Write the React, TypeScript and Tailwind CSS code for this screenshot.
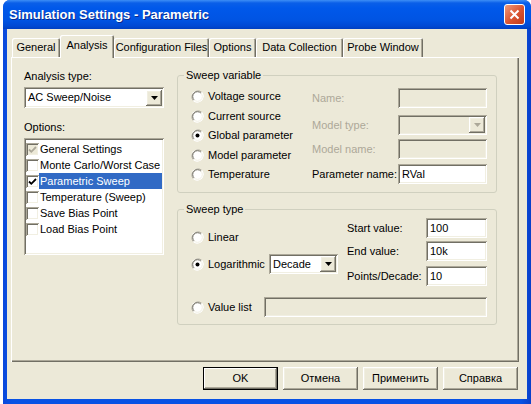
import type { ReactNode } from "react";

const sunken =
  "shadow-[inset_1px_1px_#aca899,inset_-1px_-1px_#fff,inset_2px_2px_#716f64,inset_-2px_-2px_#f1efe2]";
const raised =
  "shadow-[inset_-1px_-1px_#716f64,inset_1px_1px_#fff,inset_-2px_-2px_#aca899,inset_2px_2px_#f1efe2]";

function Radio({ checked = false }: { checked?: boolean }) {
  return (
    <svg width="13" height="13" viewBox="0 0 13 13" className="shrink-0">
      <circle cx="6.5" cy="6.5" r="6" fill="#fff" />
      <path d="M10.7 2.3 A6 6 0 0 0 2.3 10.7" fill="none" stroke="#aca899" />
      <path d="M9.9 3.1 A4.8 4.8 0 0 0 3.1 9.9" fill="none" stroke="#716f64" />
      <path d="M10.7 2.3 A6 6 0 0 1 2.3 10.7" fill="none" stroke="#fff" />
      <path d="M9.9 3.1 A4.8 4.8 0 0 1 3.1 9.9" fill="none" stroke="#f1efe2" />
      {checked && <circle cx="6.5" cy="6.5" r="2" fill="#000" />}
    </svg>
  );
}

function RadioRow({ label, checked, className = "" }: { label: string; checked?: boolean; className?: string }) {
  return (
    <div className={`flex items-center gap-[4px] ${className}`}>
      <Radio checked={checked} />
      <span>{label}</span>
    </div>
  );
}

function Check({ state }: { state: "off" | "on" | "grey" }) {
  return (
    <div
      className={`w-[13px] h-[13px] shrink-0 flex items-center justify-center ${sunken} ${
        state === "grey" ? "bg-[#ece9d8]" : "bg-white"
      }`}
    >
      {state !== "off" && (
        <svg width="9" height="9" viewBox="0 0 9 9">
          <path
            d="M1 4.5 L3.3 6.8 L8 2"
            fill="none"
            stroke={state === "grey" ? "#aca899" : "#000"}
            strokeWidth="1.8"
          />
        </svg>
      )}
    </div>
  );
}

function Edit({ value = "", disabled = false, className = "" }: { value?: string; disabled?: boolean; className?: string }) {
  return (
    <div
      className={`h-[20px] flex items-center px-[4px] ${sunken} ${disabled ? "bg-[#ece9d8]" : "bg-white"} ${className}`}
    >
      {value}
    </div>
  );
}

function Combo({ value = "", disabled = false, className = "" }: { value?: string; disabled?: boolean; className?: string }) {
  return (
    <div
      className={`flex items-center justify-between pl-[4px] pr-[2px] ${sunken} ${
        disabled ? "bg-[#ece9d8]" : "bg-white"
      } ${className}`}
    >
      <span>{value}</span>
      <div className={`w-[16px] h-[16px] bg-[#ece9d8] flex items-center justify-center ${raised}`}>
        <svg width="7" height="4" viewBox="0 0 7 4">
          <path d="M0 0 H7 L3.5 4 Z" fill={disabled ? "#aca899" : "#000"} />
        </svg>
      </div>
    </div>
  );
}

function Group({ title, className = "", children }: { title: string; className?: string; children: ReactNode }) {
  return (
    <fieldset className={`border border-[#d0d0bf] rounded-[3px] ${className}`}>
      <legend className="ml-[6px] px-[2px] leading-[14px]">{title}</legend>
      {children}
    </fieldset>
  );
}

function Button({ label, isDefault = false }: { label: string; isDefault?: boolean }) {
  return (
    <div
      className={`w-[75px] h-[23px] flex items-center justify-center bg-[#ece9d8] ${
        isDefault
          ? "border border-black shadow-[inset_-1px_-1px_#716f64,inset_1px_1px_#fff,inset_-2px_-2px_#aca899]"
          : raised
      }`}
    >
      {label}
    </div>
  );
}

const tabs = [
  { label: "General", w: "w-[48px]" },
  { label: "Analysis", w: "w-[54px]", active: true },
  { label: "Configuration Files", w: "w-[95px]" },
  { label: "Options", w: "w-[47px]" },
  { label: "Data Collection", w: "w-[87px]" },
  { label: "Probe Window", w: "w-[80px]" },
];

const options: { label: string; state: "off" | "on" | "grey"; selected?: boolean }[] = [
  { label: "General Settings", state: "grey" },
  { label: "Monte Carlo/Worst Case", state: "off" },
  { label: "Parametric Sweep", state: "on", selected: true },
  { label: "Temperature (Sweep)", state: "off" },
  { label: "Save Bias Point", state: "off" },
  { label: "Load Bias Point", state: "off" },
];

export default function App() {
  return (
    <div className="flex w-[531px] h-[404px] overflow-hidden bg-white font-['Liberation_Sans',Arial,sans-serif] text-[11px] leading-[13px] text-black">
      <div className="w-[3px] shrink-0 bg-white" />
      <div className="flex flex-col flex-1 rounded-t-[7px] overflow-hidden bg-[linear-gradient(to_right,#0a48dc,#0852e4_10px,#0852e4_calc(100%-10px),#0a3fc8)]">
        {/* title bar */}
        <div className="h-[29px] shrink-0 flex items-center justify-between pl-[6px] pr-[6px] bg-[linear-gradient(to_bottom,#3d8ef6_0px,#0a5fe8_3px,#0058ea_8px,#0054e3_20px,#0049d4_26px,#003fc0_29px)]">
          <span className="text-white font-bold text-[13px] leading-[16px] [text-shadow:1px_1px_#0c2a8a]">
            Simulation Settings - Parametric
          </span>
          <div className="w-[21px] h-[21px] rounded-[3px] border border-white bg-[linear-gradient(135deg,#ef9a7c,#d9532f_55%,#bf3b1c)] flex items-center justify-center">
            <svg width="11" height="11" viewBox="0 0 11 11">
              <path d="M1.5 1.5 L9.5 9.5 M9.5 1.5 L1.5 9.5" stroke="#fff" strokeWidth="2" />
            </svg>
          </div>
        </div>

        {/* dialog body */}
        <div className="flex-1 mx-[4px] mb-[5px] bg-[#ece9d8] flex flex-col">
          {/* tabs */}
          <div className="flex items-end h-[28px] pt-[6px] ml-[5px]">
            {tabs.map((t) => (
              <div
                key={t.label}
                className={`${t.w} flex items-center justify-center rounded-t-[2px] bg-[#ece9d8] ${
                  t.active
                    ? "h-[23px] -mb-px relative z-10 pb-[2px] shadow-[inset_1px_1px_#fff,inset_-1px_0_#716f64,inset_-2px_0_#aca899]"
                    : "h-[19px] shadow-[inset_1px_1px_#fff,inset_-1px_0_#716f64,inset_-2px_0_#aca899]"
                }`}
              >
                {t.label}
              </div>
            ))}
          </div>

          {/* tab panel */}
          <div className="ml-[4px] mr-[8px] h-[305px] flex shadow-[inset_1px_1px_#fff,inset_-1px_-1px_#716f64,inset_-2px_-2px_#aca899]">
            {/* left column */}
            <div className="ml-[13px] mt-[13px] w-[140px] flex flex-col">
              <div>Analysis type:</div>
              <Combo value="AC Sweep/Noise" className="mt-[4px] h-[21px]" />
              <div className="mt-[13px]">Options:</div>
              <div className={`mt-[4px] h-[117px] bg-white pt-[3px] px-[2px] ${sunken}`}>
                {options.map((o) => (
                  <div key={o.label} className="h-[16px] flex items-center">
                    <Check state={o.state} />
                    <span
                      className={`flex-1 h-[16px] flex items-center pl-[1px] ${
                        o.selected ? "bg-[#316ac5] text-white" : ""
                      }`}
                    >
                      {o.label}
                    </span>
                  </div>
                ))}
              </div>
            </div>

            {/* right column */}
            <div className="ml-[13px] w-[320px] flex flex-col">
              <Group title="Sweep variable" className="mt-[11px] h-[125px]">
                <div className="flex">
                  <div className="ml-[13px] pt-[5px] w-[121px] flex flex-col">
                    <RadioRow label="Voltage source" className="h-[19.5px]" />
                    <RadioRow label="Current source" className="h-[19.5px]" />
                    <RadioRow label="Global parameter" checked className="h-[19.5px]" />
                    <RadioRow label="Model parameter" className="h-[19.5px]" />
                    <RadioRow label="Temperature" className="h-[19.5px]" />
                  </div>
                  <div className="flex flex-col">
                    <div className="mt-[6px] flex items-center">
                      <span className="w-[86px] text-[#aca899]">Name:</span>
                      <Edit disabled className="w-[89px]" />
                    </div>
                    <div className="mt-[7px] flex items-center">
                      <span className="w-[86px] text-[#aca899]">Model type:</span>
                      <Combo disabled className="w-[89px] h-[20px]" />
                    </div>
                    <div className="mt-[4px] flex items-center">
                      <span className="w-[86px] text-[#aca899]">Model name:</span>
                      <Edit disabled className="w-[89px]" />
                    </div>
                    <div className="mt-[5px] flex items-center">
                      <span className="w-[86px]">Parameter name:</span>
                      <Edit value="RVal" className="w-[89px]" />
                    </div>
                  </div>
                </div>
              </Group>

              <Group title="Sweep type" className="mt-[9px] h-[123px]">
                <div className="flex">
                  <div className="ml-[13px] w-[156px] flex flex-col">
                    <RadioRow label="Linear" className="mt-[11px] h-[20px]" />
                    <div className="mt-[7px] h-[20px] flex items-center">
                      <RadioRow label="Logarithmic" checked className="w-[78px]" />
                      <Combo value="Decade" className="w-[69px] h-[20px]" />
                    </div>
                  </div>
                  <div className="flex flex-col">
                    <div className="mt-[2px] flex items-center">
                      <span className="w-[79px]">Start value:</span>
                      <Edit value="100" className="w-[61px]" />
                    </div>
                    <div className="mt-[3px] flex items-center">
                      <span className="w-[79px]">End value:</span>
                      <Edit value="10k" className="w-[61px]" />
                    </div>
                    <div className="mt-[5px] flex items-center">
                      <span className="w-[79px]">Points/Decade:</span>
                      <Edit value="10" className="w-[61px]" />
                    </div>
                  </div>
                </div>
                <div className="mt-[11px] ml-[13px] flex items-center">
                  <RadioRow label="Value list" className="w-[73px]" />
                  <Edit disabled className="w-[223px]" />
                </div>
              </Group>
            </div>
          </div>

          {/* buttons */}
          <div className="mt-[5px] mr-[9px] flex justify-end gap-[5px]">
            <Button label="OK" isDefault />
            <Button label="Отмена" />
            <Button label="Применить" />
            <Button label="Справка" />
          </div>
        </div>
      </div>
    </div>
  );
}
